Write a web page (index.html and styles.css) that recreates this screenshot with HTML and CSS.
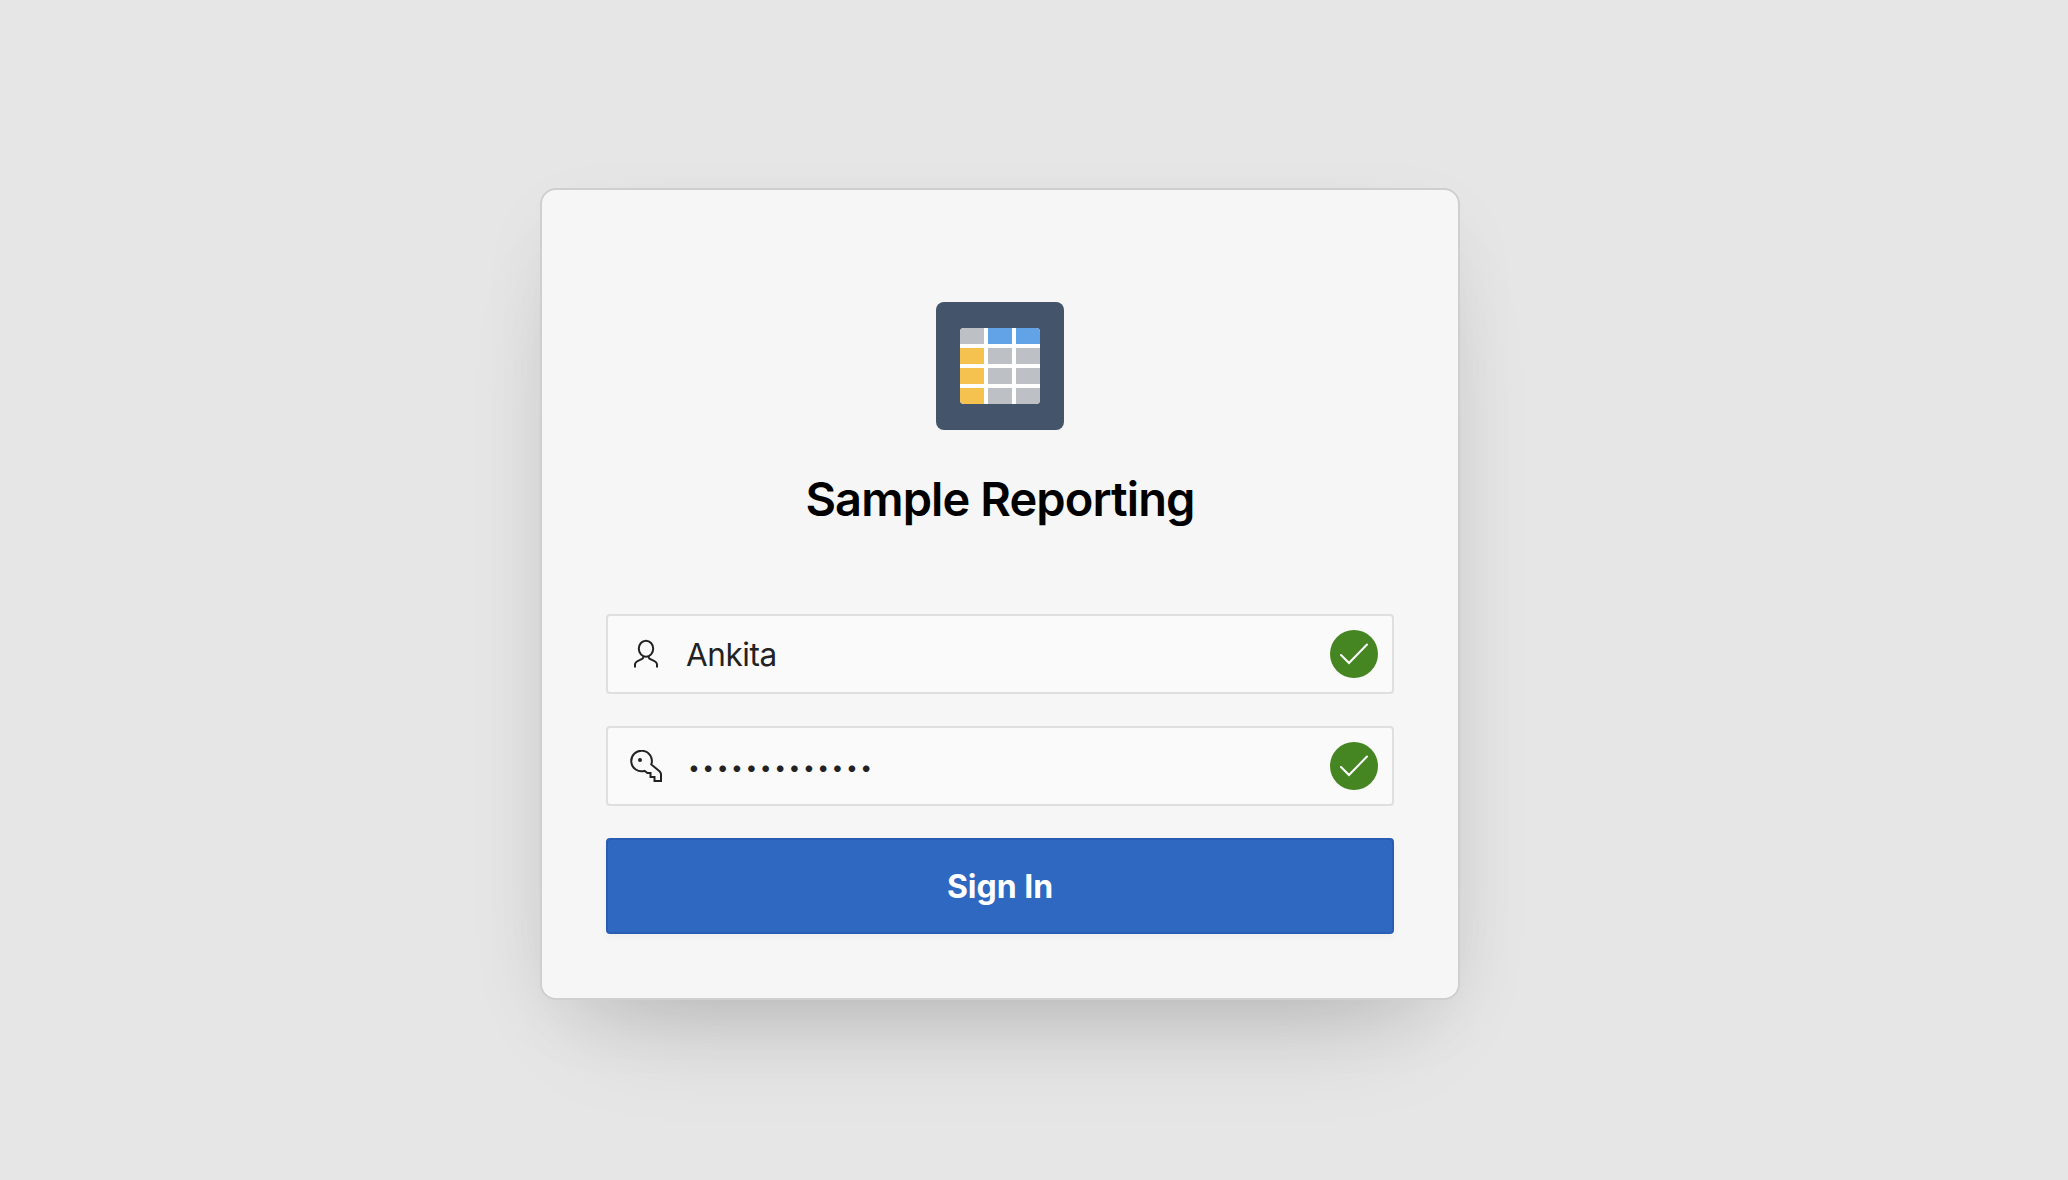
FILE: index.html
```html
<!DOCTYPE html>
<html lang="en">
<head>
<meta charset="utf-8">
<title>Sample Reporting - Sign In</title>
<link rel="stylesheet" href="styles.css">
</head>
<body>
<main class="card">
  <svg class="logo" viewBox="0 0 128 128" aria-hidden="true">
    <defs><clipPath id="sheet"><rect x="24" y="26" width="80" height="76" rx="4"/></clipPath></defs>
    <rect width="128" height="128" rx="8" fill="#44546a"/>
    <g clip-path="url(#sheet)">
      <rect x="24" y="26" width="80" height="76" fill="#fff"/>
      <path fill="#bdc1c5" d="M24 26h24v16H24zM52 46h24v16H52zM80 46h24v16H80zM52 66h24v16H52zM80 66h24v16H80zM52 86h24v16H52zM80 86h24v16H80z"/>
      <path fill="#62a2e7" d="M52 26h24v16H52zM80 26h24v16H80z"/>
      <path fill="#f5c14f" d="M24 46h24v16H24zM24 66h24v16H24zM24 86h24v16H24z"/>
    </g>
  </svg>
  <h1 class="title">Sample Reporting</h1>
  <form class="form">
    <div class="field">
      <svg class="field-icon" viewBox="0 0 32 32" aria-hidden="true">
        <ellipse cx="16" cy="10.700" rx="7.200" ry="8"/>
        <path d="M13.300 18.200V19.500C13.300 22 5 22 5 26.500V29.500M18.700 18.200V19.500C18.700 22 27 22 27 26.500V29.500"/>
      </svg>
      <span class="value">Ankita</span>
      <svg class="valid" viewBox="0 0 48 48" aria-hidden="true"><circle cx="24" cy="24" r="24"/><path d="M11 25l8 8 18-18.500"/></svg>
    </div>
    <div class="field">
      <svg class="field-icon" viewBox="0 0 32 32" aria-hidden="true">
        <path d="M21.300 14.400A10.300 10.300 0 1 0 14.500 20.900L17.500 23H20.500V27H24.500V31H31V24.500Q31 22.600 29.500 21.200Z"/>
        <circle class="hole" cx="10" cy="10" r="2"/>
      </svg>
      <span class="value password">•••••••••••••</span>
      <svg class="valid" viewBox="0 0 48 48" aria-hidden="true"><circle cx="24" cy="24" r="24"/><path d="M11 25l8 8 18-18.500"/></svg>
    </div>
    <button class="submit" type="button">Sign In</button>
  </form>
</main>
</body>
</html>
```
FILE: styles.css
```css
* {
  box-sizing: border-box;
}

body {
  margin: 0;
  height: 1180px;
  padding: 188px 0 0 540px;
  background: #e6e6e6;
  font-family: Inter, "Liberation Sans", sans-serif;
  overflow: hidden;
}

.card {
  display: flex;
  flex-direction: column;
  align-items: center;
  width: 920px;
  height: 812px;
  padding: 112px 64px 64px;
  border: 2px solid #cfcfcf;
  border-radius: 16px;
  background: #f6f6f6;
  box-shadow: 0 56px 112px -56px rgba(0, 0, 0, 0.22), 0 24px 80px -14px rgba(0, 0, 0, 0.08);
}

.logo {
  width: 128px;
  height: 128px;
}

.title {
  margin: 37px 0 0;
  font-size: 47px;
  font-weight: 600;
  line-height: 64px;
  letter-spacing: -0.9px;
  white-space: nowrap;
  color: #000;
}

.form {
  display: flex;
  flex-direction: column;
  gap: 32px;
  width: 100%;
  margin-top: 83px;
}

.field {
  display: flex;
  align-items: center;
  height: 80px;
  padding: 0 14px 0 22px;
  border: 2px solid #dfdfdf;
  border-radius: 4px;
  background: #fafafa;
}

.field-icon {
  width: 32px;
  height: 32px;
  fill: none;
  stroke: #222;
  stroke-width: 2;
}

.hole {
  fill: #222;
  stroke: none;
}

.value {
  flex: 1;
  margin-left: 24px;
  padding-top: 2px;
  font-size: 31.5px;
  line-height: 40px;
  letter-spacing: -0.45px;
  color: #222;
}

.password {
  margin-left: 26px;
  padding-top: 4px;
  font-size: 21px;
  letter-spacing: 2.55px;
}

.valid {
  width: 48px;
  height: 48px;
  fill: none;
  stroke: #fff;
  stroke-width: 2;
  stroke-linecap: round;
}

.valid circle {
  fill: #458623;
  stroke: none;
}

.submit {
  height: 96px;
  padding: 2px 0 0;
  border: 2px solid #295db4;
  border-radius: 4px;
  background: #2e68c0;
  color: #fff;
  font: 700 32px/40px Inter, "Liberation Sans", sans-serif;
  box-shadow: 0 4px 6px rgba(0, 0, 0, 0.03);
}
```
